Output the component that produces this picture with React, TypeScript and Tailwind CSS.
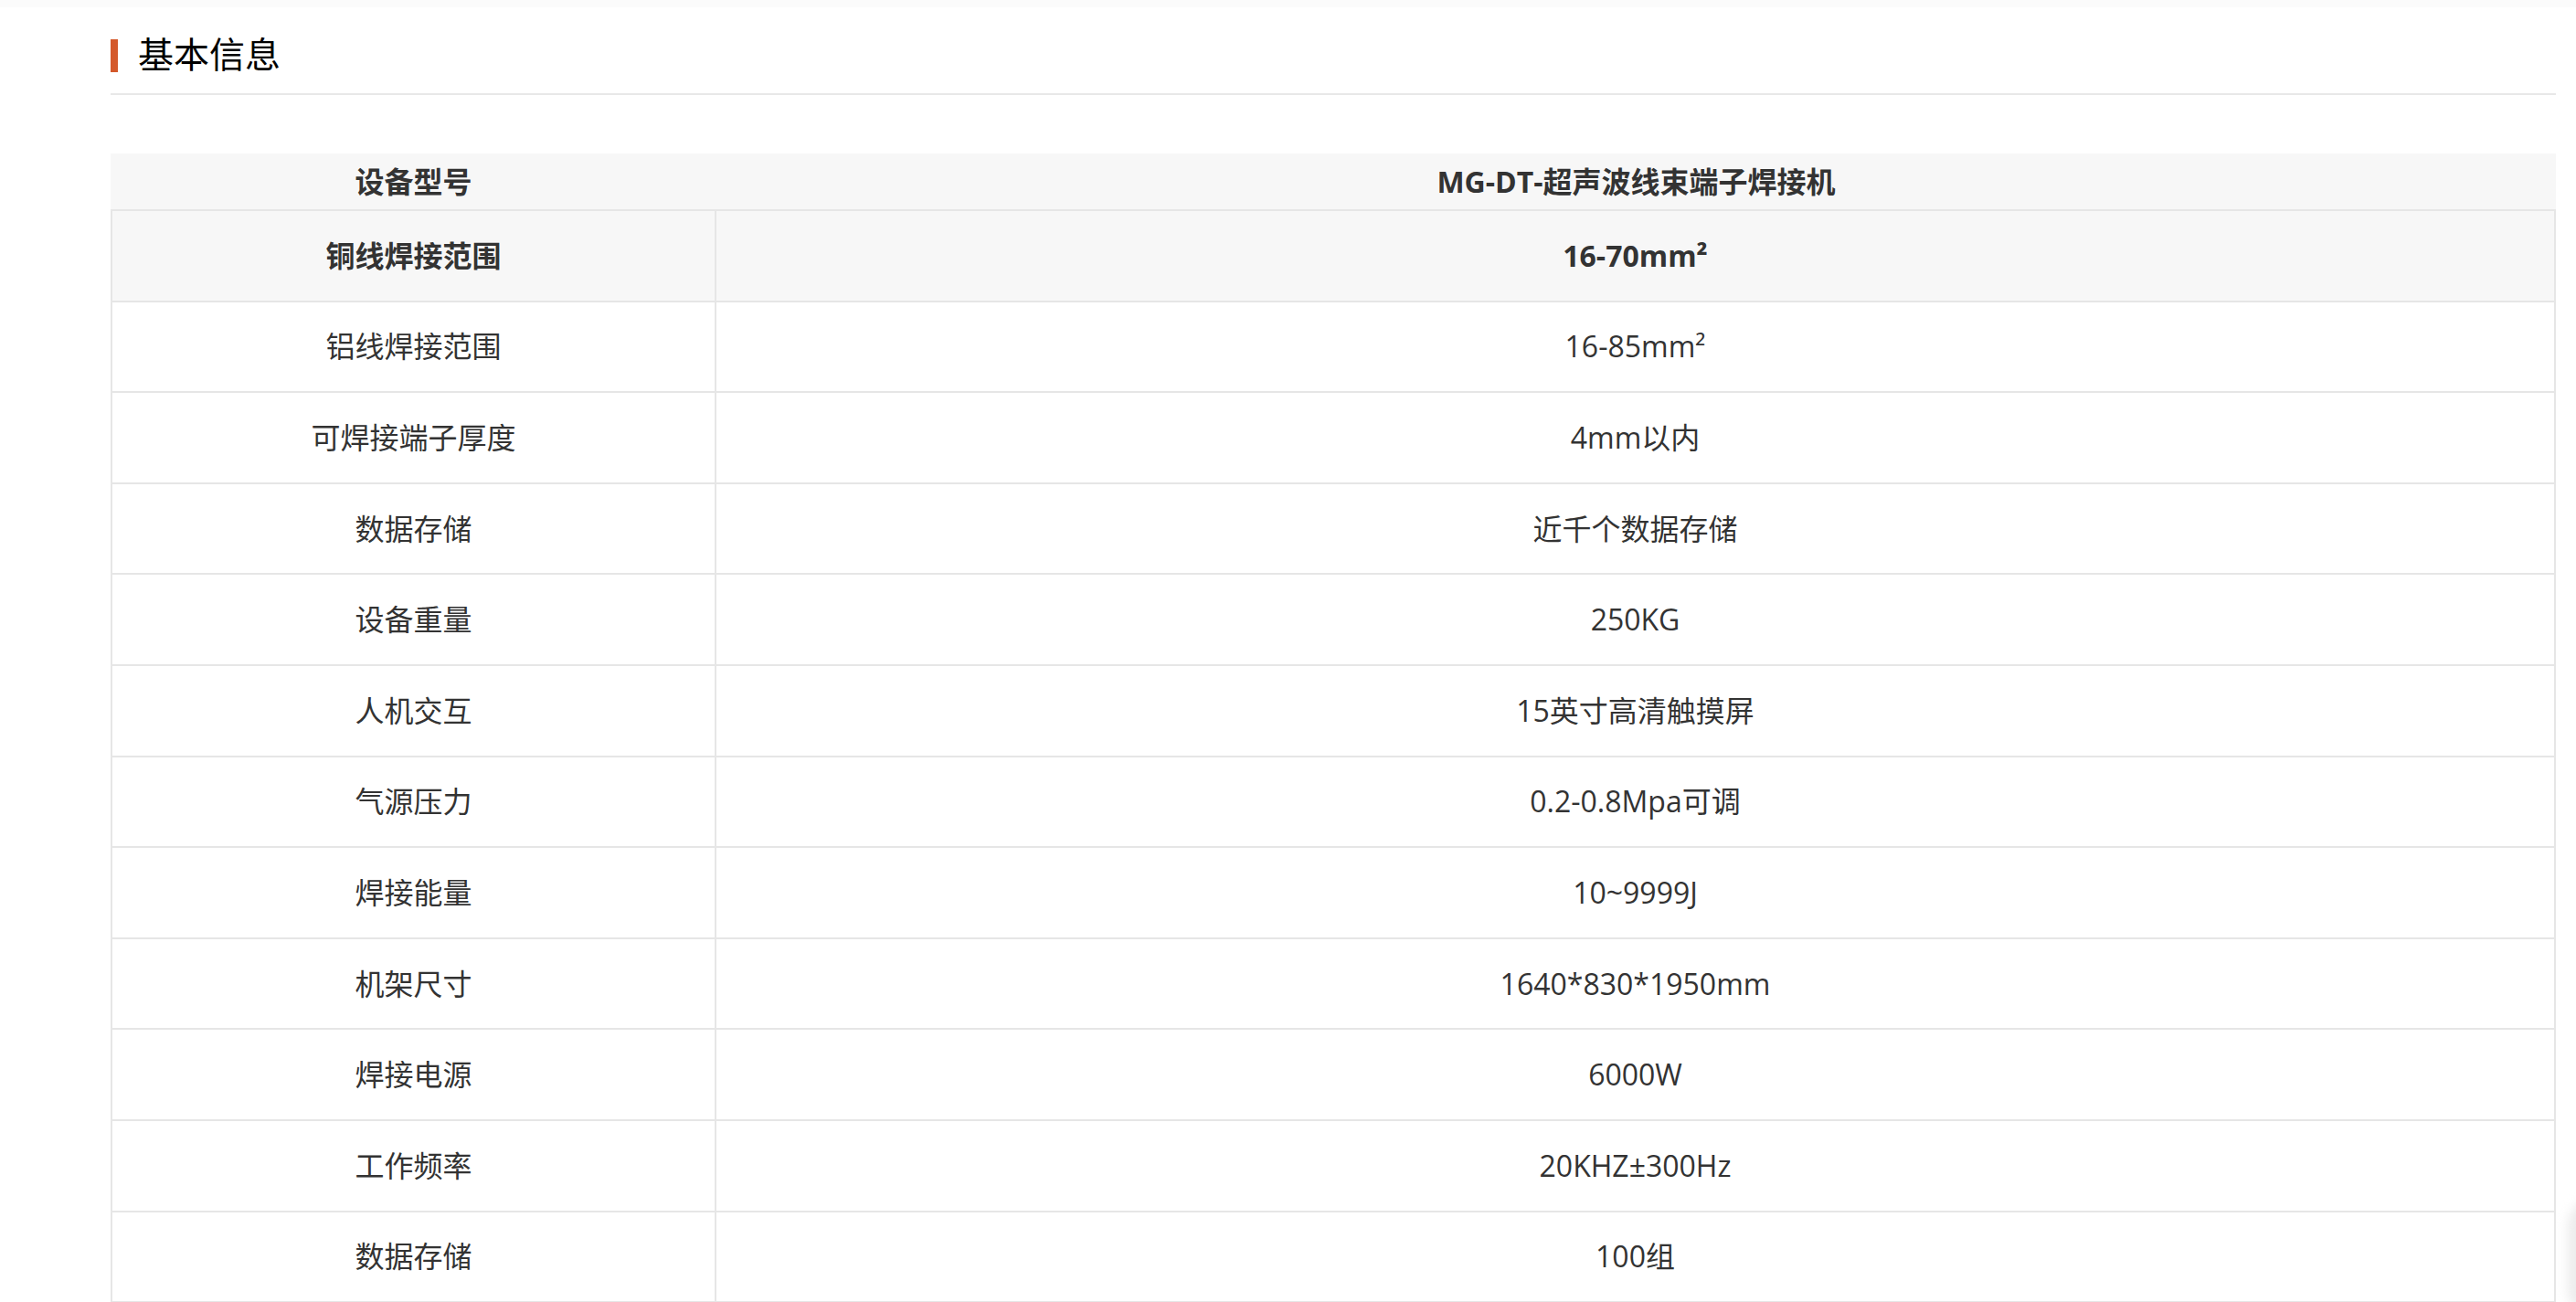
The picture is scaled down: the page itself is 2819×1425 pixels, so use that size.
import React from "react";

const rows: [string, string][] = [
  ["铝线焊接范围", "16-85mm²"],
  ["可焊接端子厚度", "4mm以内"],
  ["数据存储", "近千个数据存储"],
  ["设备重量", "250KG"],
  ["人机交互", "15英寸高清触摸屏"],
  ["气源压力", "0.2-0.8Mpa可调"],
  ["焊接能量", "10~9999J"],
  ["机架尺寸", "1640*830*1950mm"],
  ["焊接电源", "6000W"],
  ["工作频率", "20KHZ±300Hz"],
  ["数据存储", "100组"],
];

export default function App() {
  return (
    <div
      className="relative h-[1425px] w-full overflow-hidden bg-white text-[#333]"
      style={{ fontFamily: '"Open Sans", "Noto Sans CJK SC", sans-serif' }}
    >
      <div className="h-[8px] w-full bg-[#fbfbfb]" />
      <div className="pl-[121px] pr-[22px]">
        {/* Title */}
        <div className="mt-[35px] flex h-[36px] items-center">
          <div className="h-[36px] w-[8px] bg-[#d4592b]" />
          <div className="ml-[22px] -mt-[5px] text-[39px] leading-[36px] text-black">基本信息</div>
        </div>
        <div className="mt-[23px] h-[2px] w-full bg-[#e8e8e8]" />

        {/* Table */}
        <div className="mt-[64px]">
          <div className="flex h-[63px] border-b-2 border-[#e6e6e6] bg-[#f7f7f7] text-[32px] font-bold">
            <div className="flex w-[663px] items-center justify-center">设备型号</div>
            <div className="flex flex-1 items-center justify-center">MG-DT-超声波线束端子焊接机</div>
          </div>
          <div className="flex h-[99.6px] border-x-2 border-b-2 border-[#e6e6e6] bg-[#f7f7f7] text-[32px] font-bold">
            <div className="flex w-[661px] items-center justify-center border-r-2 border-[#e6e6e6]">铜线焊接范围</div>
            <div className="flex flex-1 items-center justify-center">16-70mm²</div>
          </div>
          {rows.map(([k, v], i) => (
            <div
              key={i}
              className="flex h-[99.6px] border-x-2 border-b-2 border-[#e6e6e6] bg-white text-[32px]"
            >
              <div className="flex w-[661px] items-center justify-center border-r-2 border-[#e6e6e6]">{k}</div>
              <div className="flex flex-1 items-center justify-center">{v}</div>
            </div>
          ))}
        </div>
      </div>
      <div className="absolute left-[2810px] top-[1312px] h-[130px] w-[60px] rounded-[30px] bg-[#ececec] blur-[6px]" />
    </div>
  );
}
